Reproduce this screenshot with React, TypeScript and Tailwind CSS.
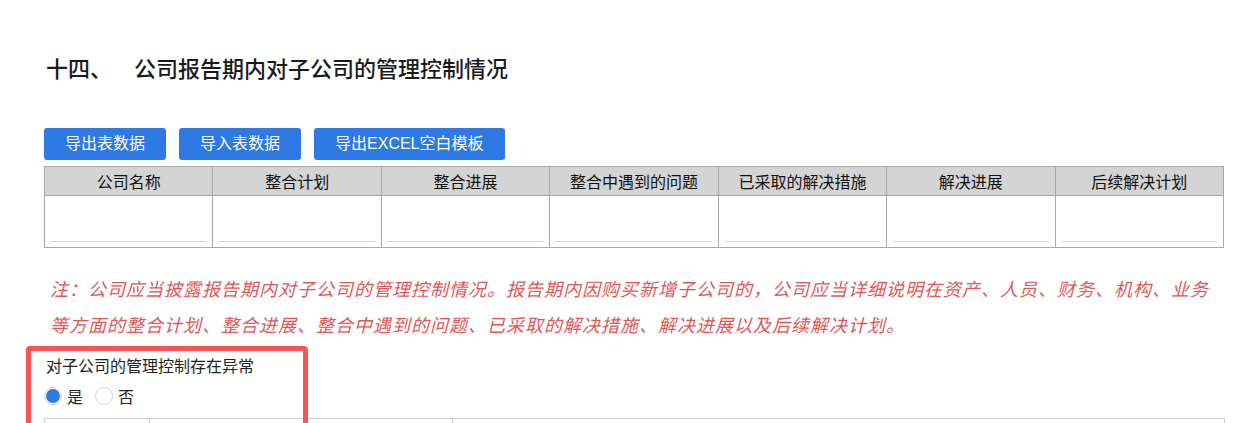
const cols = [
  "公司名称",
  "整合计划",
  "整合进展",
  "整合中遇到的问题",
  "已采取的解决措施",
  "解决进展",
  "后续解决计划",
];

const font = { fontFamily: '"Noto Sans CJK SC", "Liberation Sans", sans-serif' };
const latinFirst = { fontFamily: '"Liberation Sans", "Noto Sans CJK SC", sans-serif' };

const ActionButton = ({ label }: { label: string }) => (
  <button
    className="h-[32px] rounded-[3px] bg-[#2e79e4] px-[21px] text-[16px] leading-[32px] text-white"
    style={latinFirst}
  >
    {label}
  </button>
);

const Radio = ({ checked, label }: { checked?: boolean; label: string }) => (
  <label className="flex items-center gap-[5px]">
    <span className="flex h-[18px] w-[18px] items-center justify-center rounded-full border border-[#d2d2d2] bg-white">
      {checked && <span className="h-[14px] w-[14px] rounded-full bg-[#2e79e4]" />}
    </span>
    <span className="text-[16px] leading-[24px] text-[#222]">{label}</span>
  </label>
);

export default function App() {
  return (
    <div className="relative h-[423px] w-full overflow-hidden bg-white pl-[44px]" style={font}>
      {/* title */}
      <h2 className="mt-[52px] pl-[2px] text-[22px] font-medium leading-[30px] text-[#1a1a1a]">
        十四、<span className="ml-[22px]">公司报告期内对子公司的管理控制情况</span>
      </h2>

      {/* toolbar */}
      <div className="mt-[46px] flex gap-[13px]">
        <ActionButton label="导出表数据" />
        <ActionButton label="导入表数据" />
        <ActionButton label="导出EXCEL空白模板" />
      </div>

      {/* data table */}
      <table className="mt-[6px] w-[1180px] table-fixed border-collapse">
        <thead>
          <tr>
            {cols.map((c) => (
              <th
                key={c}
                className="h-[29px] border border-[#a8a8a8] bg-[#d4d4d4] p-0 text-center text-[16px] font-normal leading-[28px] text-[#111]"
              >
                {c}
              </th>
            ))}
          </tr>
        </thead>
        <tbody>
          <tr>
            {cols.map((c) => (
              <td key={c} className="h-[52px] border border-[#a8a8a8] px-[6px] pb-[5px] pt-0 align-bottom">
                <input className="block h-[30px] w-full border-b border-[#d0d0d0] outline-none" />
              </td>
            ))}
          </tr>
        </tbody>
      </table>

      {/* note */}
      <p className="mt-[22px] w-[1180px] pl-[6px] text-[18px] italic leading-[36px] tracking-[1px] text-[#e25656]">
        注：公司应当披露报告期内对子公司的管理控制情况。报告期内因购买新增子公司的，公司应当详细说明在资产、人员、财务、机构、业务等方面的整合计划、整合进展、整合中遇到的问题、已采取的解决措施、解决进展以及后续解决计划。
      </p>

      {/* question */}
      <div className="mt-[11px] pl-[2px] text-[16px] leading-[24px] text-[#222]">对子公司的管理控制存在异常</div>
      <div className="mt-[7px] flex gap-[12px]">
        <Radio checked label="是" />
        <Radio label="否" />
      </div>

      <div className="mt-[10px] flex h-[40px] w-[1181px] border-l border-r border-t border-[#cccccc]">
        <div className="w-[105px] border-r border-[#cccccc]" />
        <div className="w-[303px] border-r border-[#cccccc]" />
        <div className="flex-1" />
      </div>

      {/* highlight frame */}
      <div className="pointer-events-none absolute left-[26px] top-[346px] h-[100px] w-[282px] rounded-[4px] border-[5px] border-[#fa5555]" />
    </div>
  );
}
